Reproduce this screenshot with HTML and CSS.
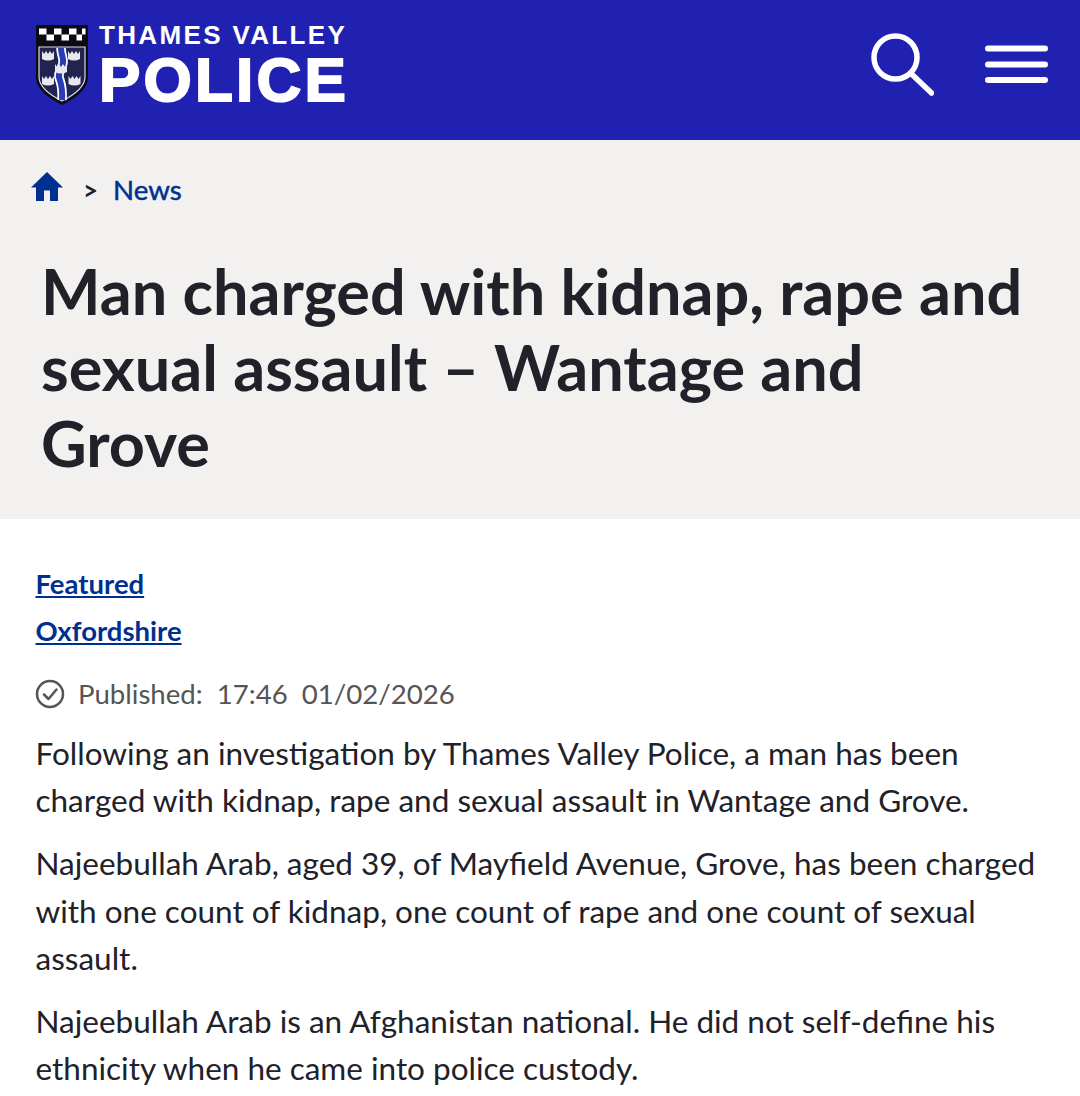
FILE: index.html
```html
<!DOCTYPE html>
<html lang="en">
<head>
<meta charset="utf-8">
<title>Man charged with kidnap, rape and sexual assault – Wantage and Grove</title>
<link rel="stylesheet" href="styles.css">
</head>
<body>
<header class="site-header">
  <a class="brand" href="#">
    <svg class="crest" viewBox="0 0 52 80" width="52" height="80" aria-hidden="true">
      <path d="M0 0H52V52C52 64 40 73 26 80C12 73 0 64 0 52Z" fill="#0b0b14"/>
      <path d="M3 3.500h7.500v6H3zM18 3.500h7.500v6H18zM33 3.500h7.500v6H33zM46 3.500h3.500v6H46zM10.500 9.500H18v6h-7.500zM25.500 9.500H33v6h-7.500zM40.500 9.500H46v6h-5.500z" fill="#fff"/>
      <path d="M3 22H49V52C49 62 38 70 26 76C14 70 3 62 3 52Z" fill="#23234f" stroke="#d9d9e6" stroke-width="1.200"/>
      <path d="M25 23C25 30 28 33 27 38C26 44 22 47 23 52C24 57 27 60 26 75" fill="none" stroke="#fff" stroke-width="9.500"/>
      <path d="M25 23C25 30 28 33 27 38C26 44 22 47 23 52C24 57 27 60 26 75" fill="none" stroke="#2b3bb8" stroke-width="6"/>
      <g fill="#e8e8ee">
        <path d="M6 26l2 3 2-3 2 3 2-3 2 3 2-3v8q-6 3-12 0z"/>
        <path d="M32 26l2 3 2-3 2 3 2-3 2 3 2-3v8q-6 3-12 0z"/>
        <path d="M19 39l2 3 2-3 2 3 2-3 2 3 2-3v8q-6 3-12 0z"/>
        <path d="M6 51l2 3 2-3 2 3 2-3 2 3 2-3v8q-6 3-12 0z"/>
        <path d="M32.500 51l2 3 2-3 2 3 2-3 2 3 2-3v8q-6 3-12 0z"/>
      </g>
    </svg>
    <span class="wordmark">
      <span class="wordmark-top">THAMES VALLEY</span>
      <span class="wordmark-main">POLICE</span>
    </span>
  </a>
  <nav class="header-actions">
    <a href="#" class="icon-link" aria-label="Search">
      <svg viewBox="0 0 64 64" width="64" height="64" fill="none" stroke="#fff" stroke-width="5.500" stroke-linecap="round">
        <circle cx="25.500" cy="25.500" r="21.500"/>
        <path d="M40.500 41L61.500 61"/>
      </svg>
    </a>
    <a href="#" class="icon-link" aria-label="Menu">
      <svg viewBox="0 0 64 38" width="64" height="38" fill="none" stroke="#fff" stroke-width="6" stroke-linecap="round">
        <path d="M4 3.500H61M4 19.500H61M4 35H61"/>
      </svg>
    </a>
  </nav>
</header>

<section class="hero">
  <nav class="breadcrumb">
    <a href="#" class="home" aria-label="Home">
      <svg viewBox="0 0 32 29" width="32" height="29"><path d="M16 0L32 15.500H27V29H19V18.500H13V29H5V15.500H0Z" fill="#00308f"/></svg>
    </a>
    <span class="sep">&gt;</span>
    <a href="#" class="crumb">News</a>
  </nav>
  <h1>Man charged with kidnap, rape and sexual assault – Wantage and Grove</h1>
</section>

<main class="article">
  <ul class="tags">
    <li><a href="#">Featured</a></li>
    <li><a href="#">Oxfordshire</a></li>
  </ul>
  <p class="published">
    <svg class="published-icon" viewBox="0 0 30 30" width="30" height="30" fill="none" stroke="#555" stroke-width="2.500" stroke-linecap="round" stroke-linejoin="round">
      <circle cx="15" cy="15" r="13"/>
      <path d="M9 15.500L13.500 20L21.500 10.500"/>
    </svg>
    <span>Published:&nbsp; 17:46&nbsp; 01/02/2026</span>
  </p>
  <p>Following an investigation by Thames Valley Police, a man has been charged with kidnap, rape and sexual assault in Wantage and Grove.</p>
  <p>Najeebullah Arab, aged 39, of Mayfield Avenue, Grove, has been charged with one count of kidnap, one count of rape and one count of sexual assault.</p>
  <p>Najeebullah Arab is an Afghanistan national. He did not self-define his ethnicity when he came into police custody.</p>
</main>
</body>
</html>
```
FILE: styles.css
```css
* { box-sizing: border-box; }
html, body { margin: 0; padding: 0; }
body {
  font-family: "Lato", "Liberation Sans", sans-serif;
  background: #fff;
  color: #212129;
  overflow: hidden;
  height: 1096px;
}
.site-header {
  height: 140px;
  background: #2121b1;
  display: flex;
  justify-content: space-between;
  align-items: center;
  padding: 0 32px 12px 36px;
}
.brand {
  display: flex;
  align-items: center;
  gap: 11px;
  color: #fff;
  text-decoration: none;
}
.crest { display: block; margin-top: 2px; }
.wordmark {
  display: flex;
  flex-direction: column;
  font-family: "Liberation Sans", Arial, sans-serif;
  font-weight: 700;
  margin-top: 4px;
}
.wordmark-top { font-size: 26px; line-height: 26px; letter-spacing: 2.350px; white-space: nowrap; }
.wordmark-main {
  font-size: 62px;
  line-height: 60px;
  margin-top: 2px;
  letter-spacing: 3.200px;
  -webkit-text-stroke: 2px #fff;
}
.header-actions { display: flex; align-items: center; gap: 50px; }
.icon-link { display: block; line-height: 0; }

.hero {
  height: 379px;
  background: #f2f1f0;
  padding: 32px 48px 0 32px;
}
.breadcrumb {
  display: flex;
  align-items: center;
  font-size: 27.600px;
  line-height: 36px;
  height: 36px;
}
.home { display: block; line-height: 0; margin-top: -7px; margin-left: -1px; }
.sep { font-size: 26px; font-weight: 700; margin: 0 15px 0 20px; color: #212129; }
.crumb { color: #00308f; text-decoration: none; -webkit-text-stroke: 0.500px #00308f; }
h1 {
  margin: 45px 0 0 9px;
  font-size: 63px;
  line-height: 76px;
  font-weight: 700;
  color: #212129;
}
.article { padding: 41px 35.500px 0; font-size: 31.500px; line-height: 47.400px; }
.tags { list-style: none; margin: 0; padding: 0; font-size: 27.500px; line-height: 47px; }
.tags a { color: #00308f; font-weight: 700; }
.published {
  display: flex;
  align-items: center;
  gap: 13.500px;
  color: #555;
  font-size: 27.600px;
}
.published-icon { margin-left: -1px; }
.article p { margin: 0 0 15.500px; }
.article p.published { margin: 16px 0 12.500px; }
```
